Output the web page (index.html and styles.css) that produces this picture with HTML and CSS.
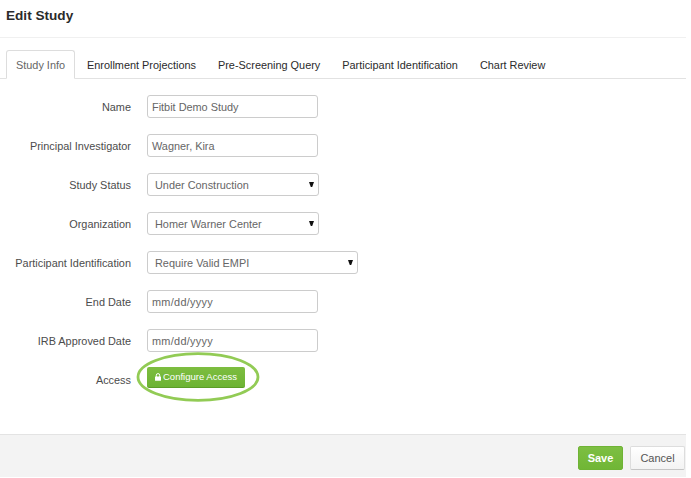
FILE: index.html
```html
<!DOCTYPE html>
<html lang="en">
<head>
<meta charset="utf-8">
<title>Edit Study</title>
<link rel="stylesheet" href="styles.css">
</head>
<body>
<main class="dialog">
  <header class="header"><h1>Edit Study</h1></header>
  <nav class="tabs">
    <a class="tab active">Study Info</a>
    <a class="tab">Enrollment Projections</a>
    <a class="tab">Pre-Screening Query</a>
    <a class="tab">Participant Identification</a>
    <a class="tab">Chart Review</a>
  </nav>
  <form class="form">
    <div class="row"><span class="label">Name</span><div class="field">Fitbit Demo Study</div></div>
    <div class="row"><span class="label">Principal Investigator</span><div class="field">Wagner, Kira</div></div>
    <div class="row"><span class="label">Study Status</span><div class="field select"><span>Under Construction</span><svg class="arrow" viewBox="0 0 5 5"><path d="M0 0h5L3.2 5H1.8z"/></svg></div></div>
    <div class="row"><span class="label">Organization</span><div class="field select"><span>Homer Warner Center</span><svg class="arrow" viewBox="0 0 5 5"><path d="M0 0h5L3.2 5H1.8z"/></svg></div></div>
    <div class="row"><span class="label">Participant Identification</span><div class="field select wide"><span>Require Valid EMPI</span><svg class="arrow" viewBox="0 0 5 5"><path d="M0 0h5L3.2 5H1.8z"/></svg></div></div>
    <div class="row"><span class="label">End Date</span><div class="field date">mm/dd/yyyy</div></div>
    <div class="row"><span class="label">IRB Approved Date</span><div class="field date">mm/dd/yyyy</div></div>
    <div class="row access">
      <span class="label">Access</span>
      <button type="button" class="configure">
        <svg class="lock" viewBox="0 0 6 8"><path d="M1.3 4V2.3a1.7 1.7 0 0 1 3.4 0V4" fill="none" stroke="#fff" stroke-width="1"/><rect y="3.6" width="6" height="4.2" rx=".5" fill="#fff"/></svg>
        <span>Configure Access</span>
      </button>
      <svg class="highlight" viewBox="0 0 124 52"><ellipse cx="62" cy="26" rx="60" ry="23.3" fill="none" stroke="#92cb55" stroke-width="2.8"/></svg>
    </div>
  </form>
  <footer class="footer">
    <button type="button" class="btn save">Save</button>
    <button type="button" class="btn cancel">Cancel</button>
  </footer>
</main>
</body>
</html>
```
FILE: styles.css
```css
* { box-sizing: border-box; }
body {
  margin: 0;
  background: #fff;
  font: 10.9px/14px "Liberation Sans", Arial, sans-serif;
  color: #4c4c4c;
}
.dialog {
  width: 686px;
  height: 478px;
  display: flex;
  flex-direction: column;
}
.header {
  height: 38px;
  padding: 7px 0 0 6px;
  border-bottom: 1px solid #f0f0f0;
}
h1 {
  margin: 0;
  font-size: 13.6px;
  line-height: 17px;
  color: #2b2b2b;
}
.tabs {
  display: flex;
  height: 29px;
  margin-top: 12px;
  padding-left: 6px;
  border-bottom: 1px solid #e2e2e2;
  gap: 2px;
  white-space: nowrap;
}
.tab {
  height: 29px;
  padding: 7px 9px 0;
  border: 1px solid transparent;
  color: #2b2b2b;
}
.active {
  width: 69px;
  border-color: #ddd;
  border-bottom-color: #fff;
  border-radius: 3px 3px 0 0;
  background: #fff;
  color: #666;
}
.form {
  flex: 1;
  display: flex;
  flex-direction: column;
  gap: 15px;
  padding-top: 15px;
}
.row {
  display: flex;
  align-items: flex-end;
  height: 24px;
}
.label {
  width: 131px;
  margin: 0 16px 4px 0;
  text-align: right;
}
.field {
  width: 171px;
  height: 23px;
  padding: 4px 4px 0;
  border: 1px solid #ccc;
  border-radius: 3px;
  color: #666;
}
.select {
  display: flex;
  justify-content: space-between;
  width: 172px;
  padding-left: 7px;
}
.wide { width: 211px; }
.arrow {
  width: 5px;
  height: 5px;
  margin-top: 4px;
  fill: #111;
}
.date { letter-spacing: .3px; }
.access { position: relative; }
.configure {
  display: flex;
  align-items: center;
  gap: 2px;
  width: 98px;
  height: 21px;
  margin-bottom: 3px;
  padding: 0 8px;
  border: 0;
  border-bottom: 1px solid #5b9d27;
  border-radius: 2px;
  background: linear-gradient(#7dbd40, #6cb333);
  color: #fff;
  font: 9.5px/18px "Liberation Sans", Arial, sans-serif;
  white-space: nowrap;
}
.lock {
  flex: none;
  width: 6px;
  height: 8px;
}
.highlight {
  position: absolute;
  left: 136px;
  top: -16px;
  width: 124px;
  height: 52px;
}
.footer {
  display: flex;
  justify-content: flex-end;
  align-items: flex-start;
  gap: 7px;
  height: 43px;
  margin-bottom: 1px;
  padding: 11px 1px 0 0;
  border-top: 1px solid #e3e3e3;
  background: #f3f3f3;
}
.btn {
  height: 24px;
  padding: 0;
  border-radius: 2px;
  font: 11px/22px "Liberation Sans", Arial, sans-serif;
}
.save {
  width: 45px;
  border: 1px solid #6fb335;
  background: linear-gradient(#7dbf42, #70b636);
  color: #fff;
  font-weight: bold;
}
.cancel {
  width: 55px;
  border: 1px solid #ddd;
  border-bottom-color: #c5c5c5;
  background: linear-gradient(#fff, #f3f3f3);
  color: #555;
}
```
